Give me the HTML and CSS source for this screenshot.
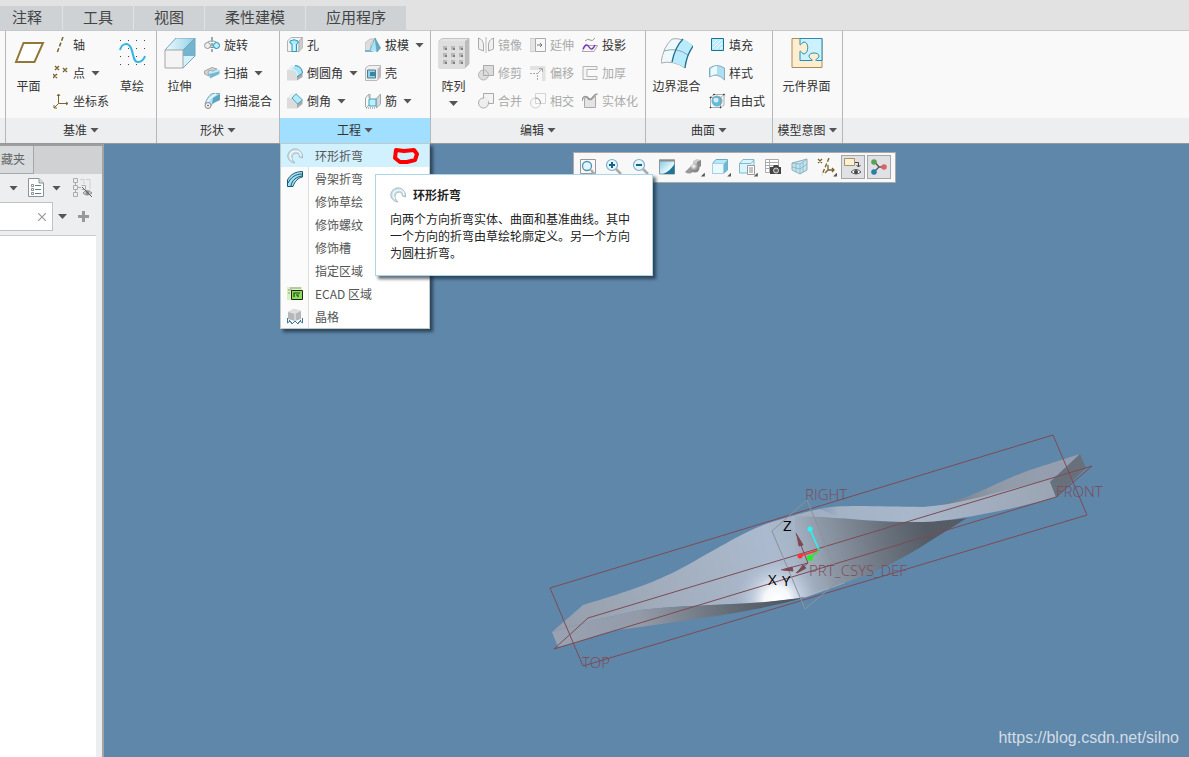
FILE: index.html
```html
<!DOCTYPE html>
<html lang="zh-CN">
<head>
<meta charset="utf-8">
<title>零件建模</title>
<link rel="stylesheet" href="styles.css">
</head>
<body>
<nav class="tabs">
  <button class="tab tab-first">注释</button>
  <button class="tab">工具</button>
  <button class="tab">视图</button>
  <button class="tab">柔性建模</button>
  <button class="tab">应用程序</button>
</nav>

<header class="ribbon">
  <div class="group stub"><div class="tools"></div><div class="foot"></div></div>

  <section class="group datum">
    <div class="tools">
      <button class="big"><svg viewBox="0 0 32 32"><path d="M10.500 5H30L21.500 24H3Z" fill="#fff" stroke="#93773a" stroke-width="2"/></svg>平面</button>
      <div class="stack">
        <button class="cmd"><svg viewBox="0 0 16 16"><path d="M10 0L4 16" stroke="#7b632c" stroke-width="1.500" stroke-dasharray="4 2"/></svg>轴</button>
        <button class="cmd"><svg viewBox="0 0 16 16"><path d="M2 1l4 4M6 1l-4 4M10 3l4 4M14 3l-4 4M0 9l4 4M4 9l-4 4" stroke="#7b632c" stroke-width="1.400"/></svg>点<i class="caret"></i></button>
        <button class="cmd"><svg viewBox="0 0 16 16"><path d="M5.500 1V10.500H15M5.500 10.500L1 15M4 3l1.500-2L7 3M13 9l2 1.500L13 12M1 12v3h3" fill="none" stroke="#7b632c"/></svg>坐标系</button>
      </div>
      <button class="big"><svg viewBox="0 0 32 32"><path d="M4 2.500H30M4 10.500H30M4 18.500H30M4 26.500H30" stroke="#444" stroke-dasharray="1 7"/><path d="M4 12C6 5 12 4 15 10C18 17 17 24 22 24C26 24 28 21 29 18" fill="none" stroke="#31b4e3" stroke-width="2"/></svg>草绘</button>
    </div>
    <button class="foot">基准<i class="caret"></i></button>
  </section>

  <section class="group shape">
    <div class="tools">
      <button class="big"><svg viewBox="0 0 32 32"><defs><linearGradient id="top" x2="1"><stop offset="0" stop-color="#effbff"/><stop offset="1" stop-color="#93cfe6"/></linearGradient></defs><path d="M1 12L12 0H31L19 12Z" fill="url(#top)"/><path d="M19 12L31 0V18H19Z" fill="#74b4d0"/><path d="M19 30L31 18H19Z" fill="#d5f2fc"/><path d="M1 12H19V30H1Z" fill="#f4f4f4" stroke="#a5a5a5"/><path d="M1 12L12 0H31V18L19 30M19 12L31 0" fill="none" stroke="#71a9c0"/></svg>拉伸</button>
      <div class="stack">
        <button class="cmd"><svg viewBox="0 0 16 16"><path d="M3.500 5Q8 2 12.500 5M3.500 11Q8 9 12.500 11" fill="none" stroke="#78aebd"/><circle cx="3.500" cy="8.500" r="3" fill="#eee" stroke="#999"/><circle cx="12.500" cy="8.500" r="3" fill="#bff0ff" stroke="#168ab5"/><path d="M8 0V16" stroke="#555" stroke-dasharray="3 1 1 1"/></svg>旋转</button>
        <button class="cmd"><svg viewBox="0 0 16 16"><path d="M5 8L11 6.500 15.500 5V9L6 13.500Z" fill="#74b8d3"/><path d="M5 8L11 6.500 15.500 5" stroke="#c4eaf7" stroke-width="2" fill="none"/><path d="M.5 6L8 2.500 13 4 9 6 5 5.500 4 8 5 9V11L.5 9Z" fill="#cfd3d5" stroke="#8e9a9f" stroke-width=".8"/></svg>扫描<i class="caret"></i></button>
        <button class="cmd"><svg viewBox="0 0 16 16"><path d="M1 11C3 5 6 1 9 .5H15.500V7C10 8 8 11 6 14Z" fill="#b2e2f2" stroke="#6f9aa9" stroke-width=".8"/><path d="M9 5L15.500 1V7L8 11Z" fill="#5aa5c3"/><path d="M3 10C5 6 8 3 12 1" fill="none" stroke="#e9faff" stroke-width="1.500"/><circle cx="4" cy="12.500" r="3" fill="#f0f0f0" stroke="#888"/><circle cx="4" cy="12.500" r=".8" fill="#555"/></svg>扫描混合</button>
      </div>
    </div>
    <button class="foot">形状<i class="caret"></i></button>
  </section>

  <section class="group engineering">
    <div class="tools">
      <div class="stack">
        <button class="cmd"><svg viewBox="0 0 16 16"><path d="M.5 4L4 .5H15.500L12 4V14.500H.5Z" fill="#f3f3f3" stroke="#b3b3b3"/><path d="M12 4V14.500L15.500 11V.5Z" fill="#ccc" stroke="#aaa" stroke-width=".6"/><path d="M3 4Q7 1.500 11 4V6L9.500 7V14.500H5V7L3 6Z" fill="#a8eaff" stroke="#2b9abb"/><path d="M7 7V14" stroke="#fff"/></svg>孔</button>
        <button class="cmd"><svg viewBox="0 0 16 16"><path d="M0 5L4 .5H8L4 5Z" fill="#eee"/><path d="M0 5H4Q10 6 10 12V15.500H0Z" fill="#dcdcdc"/><path d="M10 12l5.500-4v4L10 15.500z" fill="#aaa"/><path d="M4 5L8 .5Q15 1 15.500 8L10 12Q10 6 4 5Z" fill="#a7e3fa"/><path d="M8 .5Q15 1 15.500 8L10 12" fill="none" stroke="#338bab"/><path d="M5 4Q10 5 11 10" stroke="#e6f9ff" fill="none"/></svg>倒圆角<i class="caret"></i></button>
        <button class="cmd"><svg viewBox="0 0 16 16"><path d="M0 5L4 .5H9L5 5Z" fill="#eee"/><path d="M0 5H5L10 11V15.500H0Z" fill="#dcdcdc"/><path d="M10 11l5.500-4v4L10 15.500z" fill="#aaa"/><path d="M5 5L9 .8L15.500 7L10.500 11Z" fill="#b2ecfb" stroke="#338bab" stroke-width=".8"/></svg>倒角<i class="caret"></i></button>
      </div>
      <div class="stack">
        <button class="cmd"><svg viewBox="0 0 16 16"><path d="M0 6L5 2H10L6 6V14H0Z" fill="#dedede" stroke="#b0b0b0" stroke-width=".7"/><path d="M0 13H5L9 15H0Z" fill="#76b6ce"/><path d="M5 13L10 1 12 15Z" fill="#ade4f5"/><path d="M10 1L15.500 11L12 15Z" fill="#62a8c3"/><path d="M5 13L10 1L15.500 11L12 15L10 1" fill="none" stroke="#5c9db5" stroke-width=".7"/></svg>拔模<i class="caret"></i></button>
        <button class="cmd"><svg viewBox="0 0 16 16"><path d="M.5 3L4 .5H15.500V12L12 15.500H.5Z" fill="#f0f0f0" stroke="#aaa" stroke-width=".8"/><path d="M12.500 4l3-3v11l-3 3z" fill="#bbb"/><path d="M2.500 5H10.500V13H2.500Z" fill="#94d3e8" stroke="#507d8d"/><path d="M5 7H10V11H5Z" fill="#3985a5"/></svg>壳</button>
        <button class="cmd"><svg viewBox="0 0 16 16"><path d="M.5 5L4 1V5M.5 5V14M5 1V11L1 15" fill="none" stroke="#9aa8ad"/><path d="M4 6H11.500L15.500 1V10L11 13H4Z" fill="#9bd3e6"/><path d="M4 6H11V13H4Z" fill="#b8f2ff" stroke="#4c9db7"/><path d="M11 6L15.500 1V11L11.500 15V6" fill="#d2d8da" stroke="#899da5" stroke-width=".8"/><path d="M1 15H11" stroke="#777" stroke-dasharray="1 1"/></svg>筋<i class="caret"></i></button>
      </div>
    </div>
    <button class="foot active" aria-expanded="true">工程<i class="caret"></i></button>
    <div class="menu" role="menu">
      <button class="item hover" role="menuitem"><svg viewBox="0 0 16 16"><path d="M6 14.500C2 13 0 10 1 6C3 1 9-1 13 3C15 5 16 7 15.500 10L12.500 9C12 6 10 4.500 8 5.500C4 7 4 11 8 15Z" fill="#c9dfe7" stroke="#9fb0b6" stroke-width=".8"/><path d="M5 12C1 8 4 3 9 3C12 3 14 5 14 8" fill="none" stroke="#f5fcff" stroke-width="1.200"/></svg>环形折弯
        <svg class="mark" viewBox="0 0 28 20"><path d="M4 4L12 5L22 4L25 8L23 14L15 16H8L3 12Z" fill="none" stroke="red" stroke-width="4" stroke-linejoin="round"/></svg></button>
      <button class="item" role="menuitem"><svg viewBox="0 0 16 16"><path d="M.5 9C3 4 8 .5 15.500 .5V6C11 7 8 10 6 15.500H.5Z" fill="#a6def0" stroke="#155a74"/><path d="M1 12C4 6 9 3 15 3M4 15C5 9 9 6 15 5" fill="none" stroke="#155a74"/></svg>骨架折弯</button>
      <button class="item" role="menuitem"><svg viewBox="0 0 16 16"></svg>修饰草绘</button>
      <button class="item" role="menuitem"><svg viewBox="0 0 16 16"></svg>修饰螺纹</button>
      <button class="item" role="menuitem"><svg viewBox="0 0 16 16"></svg>修饰槽</button>
      <button class="item" role="menuitem"><svg viewBox="0 0 16 16"></svg>指定区域</button>
      <button class="item" role="menuitem"><svg viewBox="0 0 16 16"><path d="M0 1H15V14H0Z" fill="#d9f3bb"/><path d="M1 7H3M1 4H5V9M3 2H14" stroke="#999" fill="none"/><path d="M4.500 4.500H15.500V13.500H4.500Z" fill="#8bdc55" stroke="#222"/><path d="M7 11V7H13M9 9H11V11M13 8" fill="none" stroke="#194818" stroke-width="1.200"/></svg>ECAD 区域</button>
      <button class="item" role="menuitem"><svg viewBox="0 0 16 16"><path d="M1 3L7 0L14 2V10L8 12L1 10Z" fill="#b5b8ba"/><path d="M1 3L7 0L14 2L8 5Z" fill="#dedede"/><path d="M8 5v7" stroke="#eee"/><path d="M.5 9V14L3 12 5 15 8 12 11 15 13 12 15.500 14V9M2 11L5 14M14 11L11 14" fill="none" stroke="#397c9b"/></svg>晶格</button>
    </div>
    <aside class="tip" role="tooltip">
      <h2><svg viewBox="0 0 16 16"><path d="M6 14.500C2 13 0 10 1 6C3 1 9-1 13 3C15 5 16 7 15.500 10L12.500 9C12 6 10 4.500 8 5.500C4 7 4 11 8 15Z" fill="#c9dfe7" stroke="#9fb0b6" stroke-width=".8"/><path d="M5 12C1 8 4 3 9 3C12 3 14 5 14 8" fill="none" stroke="#f5fcff" stroke-width="1.200"/></svg>环形折弯</h2>
      <p>向两个方向折弯实体、曲面和基准曲线。其中一个方向的折弯由草绘轮廓定义。另一个方向为圆柱折弯。</p>
    </aside>
  </section>

  <section class="group edit">
    <div class="tools">
      <button class="big"><svg viewBox="0 0 32 32"><path d="M1 3L4 .5H31V26L27 30H1Z" fill="#e4e4e4" stroke="#c4c4c4"/><path d="M27 3L31 .5V26L27 30Z" fill="#bcbcbc"/><path d="M1 3H27V30H1Z" fill="#dedede"/><path d="M5 10H25M5 17H25M5 24H25" stroke="#b9b9b9" stroke-width="4" stroke-dasharray="4 4"/><path d="M7 11H25M7 18H25M7 25H25" stroke="#808080" stroke-width="2" stroke-dasharray="2 6"/></svg>阵列<i class="caret"></i></button>
      <div class="stack">
        <button class="cmd" disabled><svg viewBox="0 0 16 16"><path d="M.5 1Q5.500 3 5.500 8V14L.5 12ZM15.500 1Q10.500 3 10.500 8V14L15.500 12Z" fill="#f1f1f1" stroke="#aaa"/><path d="M8 0V16" stroke="#bbb"/></svg>镜像</button>
        <button class="cmd" disabled><svg viewBox="0 0 16 16"><path d="M5.500 .5H15.500V10.500H5.500Z" fill="#ddd" stroke="#aaa"/><circle cx="5.500" cy="10" r="5" fill="#ddd" stroke="#b5b5b5"/><path d="M5.500 5V10.500H10" fill="none" stroke="#aaa"/></svg>修剪</button>
        <button class="cmd" disabled><svg viewBox="0 0 16 16"><path d="M5.500 .5H15.500V10.500H5.500Z" fill="#f3f3f3" stroke="#aaa"/><circle cx="5.500" cy="10" r="5" fill="#eee" stroke="#aaa"/><path d="M6 5h4v5H6z" fill="#eee"/></svg>合并</button>
      </div>
      <div class="stack">
        <button class="cmd" disabled><svg viewBox="0 0 16 16"><path d="M0 1.500H5.500V14.500H0Z" fill="#e5e5e5" stroke="#ccc"/><path d="M5.500 1.500H15.500V14.500H5.500Z" fill="#f8f8f8" stroke="#aaa"/><path d="M7 8H12M10 6L12 8L10 10" fill="none" stroke="#777"/></svg>延伸</button>
        <button class="cmd" disabled><svg viewBox="0 0 16 16"><path d="M0 1H15.500V16H12V5H0Z" fill="#e2e2e2"/><path d="M0 8.500H7.500V16" fill="none" stroke="#aaa" stroke-dasharray="2 1"/><path d="M7 9L12 4M9 3.500H12.500V7" fill="none" stroke="#aaa"/></svg>偏移</button>
        <button class="cmd" disabled><svg viewBox="0 0 16 16"><path d="M5.500 .5H15.500V10.500H5.500Z" fill="none" stroke="#d4d4d4"/><circle cx="5.500" cy="10" r="5" fill="none" stroke="#ccc"/><path d="M5.500 5A5 5 0 0 1 10.500 10.500" fill="none" stroke="#999"/></svg>相交</button>
      </div>
      <div class="stack">
        <button class="cmd"><svg viewBox="0 0 16 16"><path d="M3 4Q6 1 8 3T13 1" fill="none" stroke="#999"/><path d="M0 14.500L4 8.500H15.500L12 14.500Z" fill="#f4f4f4" stroke="#aaa"/><path d="M1 12Q4 5 7 10T13 8" fill="none" stroke="#7c2abd" stroke-width="1.400"/></svg>投影</button>
        <button class="cmd" disabled><svg viewBox="0 0 16 16"><path d="M1 1.500H15V4.500H5V11.500H15V14.500H1Z" fill="#f4f4f4" stroke="#b5b5b5"/></svg>加厚</button>
        <button class="cmd" disabled><svg viewBox="0 0 16 16"><path d="M2.500 5V14.500H13.500V3L9 7 6 4Z" fill="#e4e4e4" stroke="#aaa"/><path d="M0 8Q1 2 5 4Q8 9 11 4Q13 1 15.500 1" fill="none" stroke="#999" stroke-width="1.500"/></svg>实体化</button>
      </div>
    </div>
    <button class="foot">编辑<i class="caret"></i></button>
  </section>

  <section class="group surface">
    <div class="tools">
      <button class="big"><svg viewBox="0 0 32 32"><path d="M0 25Q2 9 11 1Q21-1 32 8Q25 18 24 30Q13 22 0 25Z" fill="#eef9fd" stroke="#aaa"/><path d="M22 1Q27 3 32 8Q25 18 24 30Q18 26 11 24Q14 9 22 1Z" fill="#b8ebfb"/><path d="M3 13Q16 9 27 17" fill="none" stroke="#8aa6b1"/><path d="M22 1Q14 9 11 24M32 8Q25 18 24 30" fill="none" stroke="#27718e" stroke-width="1.300"/></svg>边界混合</button>
      <div class="stack">
        <button class="cmd"><svg viewBox="0 0 16 16"><path d="M2.500 1.500H14.500V13.500H2.500Z" fill="#b7eafb" stroke="#137391"/><path d="M4 7L8 3M4 11L12 3M7 12L13 6M11 12L13 10" stroke="#fff"/></svg>填充</button>
        <button class="cmd"><svg viewBox="0 0 16 16"><path d="M.5 3Q8-2 15.500 3V15Q8 7 .5 12Z" fill="#acdff1" stroke="#7b9ba7" stroke-width=".8"/><path d="M2 4Q5 1 8 1V9Q5 9 2 11Z" fill="#eafaff"/></svg>样式</button>
        <button class="cmd"><svg viewBox="0 0 16 16"><circle cx="8" cy="8" r="5.500" fill="#64b9d9"/><circle cx="7" cy="7" r="2.500" fill="#cef3ff"/><path d="M1.500 4.500H11.500V14.500H1.500ZM5 1.500H15V12M1.500 4.500L5 1.500M11.500 4.500L15 1.500M11.500 14.500L15 12" fill="none" stroke="#999" stroke-width=".8"/><path d="M1 4h1v1H1zM4.500 1h1v1h-1zM14.500 1h1v1h-1zM11 14h1v1h-1zM1 14h1v1H1z" fill="#333" stroke="#333" stroke-width=".5"/></svg>自由式</button>
      </div>
    </div>
    <button class="foot">曲面<i class="caret"></i></button>
  </section>

  <section class="group intent">
    <div class="tools">
      <button class="big"><svg viewBox="0 0 32 32"><path d="M1 .5H31V29.500H1Z" fill="#ffedcf" stroke="#ab8c54"/><path d="M9 .5H31V22.500H26C22 22 28 21 28 18C28 14 18 14 18 18C18 21 24 22.500 20 22.500H9V14C9 11 11 16 13 16C18 15 18 4 13 4C11 4 9 9 9 6Z" fill="#cdf1ff" stroke="#278eb1"/></svg>元件界面</button>
    </div>
    <button class="foot">模型意图<i class="caret"></i></button>
  </section>

  <div class="group rest"><div class="tools"></div><div class="blank"></div></div>
</header>

<div class="work">
  <aside class="side">
    <div class="side-tabs"><button class="side-tab">藏夹</button></div>
    <div class="side-bar">
      <button class="tool" aria-label="显示"><i class="caret"></i></button>
      <button class="tool" aria-label="设置"><svg viewBox="0 0 18 20"><path d="M1.500 .5H12L16.500 5V18.500H1.500Z" fill="#fcfeff" stroke="#8a9498"/><path d="M12 .5V5H16.500" fill="#ddd" stroke="#8a9498"/><path d="M8 7.500H14M8 11.500H14M8 15.500H14" stroke="#5d808b"/><path d="M4.500 6.500h2v2h-2zM4.500 10.500h2v2h-2zM4.500 14.500h2v2h-2z" fill="none" stroke="#666" stroke-width=".7"/></svg><i class="caret"></i></button>
      <button class="tool" aria-label="隐藏树"><svg viewBox="0 0 22 20"><path d="M1.500 .5H5.500V4.500H1.500ZM1.500 7.500H5.500V11.500H1.500ZM1.500 14.500H5.500V18.500H1.500ZM3.500 5V7M3.500 12V14M6 9.500H9M9.500 7.500H13.500V11.500H9.500" fill="none" stroke="#aaadae"/><path d="M8 1.500H12V6M14 1.500H18V11" fill="none" stroke="#cfd1d3"/><path d="M11 15Q15 10 20 15Q15 19 11 15Z" fill="#ddd" stroke="#888"/><circle cx="15.500" cy="15" r="2" fill="#888"/><path d="M10 9L20 19" stroke="#666"/></svg></button>
    </div>
    <div class="side-find">
      <label class="find"><input type="text" aria-label="筛选"><button class="clear" aria-label="清除"><svg viewBox="0 0 8 8"><path d="M0 0L8 8M8 0L0 8" stroke="#999" stroke-width="1.200"/></svg></button></label>
      <button class="tool" aria-label="选项"><i class="caret"></i></button>
      <button class="tool" aria-label="添加"><svg class="plus" viewBox="0 0 11 11"><path d="M5.500 0V11M0 5.500H11" stroke="#999" stroke-width="3"/></svg></button>
    </div>
    <div class="tree"></div>
  </aside>

  <main class="view">
    <svg class="scene" viewBox="104 144 1085 613" preserveAspectRatio="xMidYMid meet" role="img" aria-label="扭曲实体模型">
      <defs>
        <linearGradient id="face" gradientUnits="userSpaceOnUse" x1="560" y1="640" x2="800" y2="550"><stop offset="0" stop-color="#949dab"/><stop offset=".5" stop-color="#a3afbf"/><stop offset=".9" stop-color="#abbace"/><stop offset="1" stop-color="#a5b3c5"/></linearGradient>
        <linearGradient id="dark" gradientUnits="userSpaceOnUse" x1="795" y1="560" x2="925" y2="527"><stop offset="0" stop-color="#97a3b2" stop-opacity="0"/><stop offset=".25" stop-color="#8d98a6"/><stop offset=".65" stop-color="#6c7580"/><stop offset="1" stop-color="#555c66"/></linearGradient>
        <linearGradient id="under" gradientUnits="userSpaceOnUse" x1="555" y1="640" x2="800" y2="600"><stop offset="0" stop-color="#99a2b2"/><stop offset=".35" stop-color="#939ba9"/><stop offset=".75" stop-color="#606871"/><stop offset="1" stop-color="#4c535b"/></linearGradient>
        <linearGradient id="band" gradientUnits="userSpaceOnUse" x1="790" y1="515" x2="1060" y2="490"><stop offset="0" stop-color="#98a5b6" stop-opacity="0"/><stop offset=".18" stop-color="#a4b2c6"/><stop offset=".45" stop-color="#a9b7cb"/><stop offset="1" stop-color="#9aa4b2"/></linearGradient>
        <linearGradient id="back" gradientUnits="userSpaceOnUse" x1="942" y1="504" x2="1040" y2="470"><stop offset="0" stop-color="#737c87"/><stop offset=".5" stop-color="#8f99a6"/><stop offset="1" stop-color="#959eae"/></linearGradient>
        <radialGradient id="shine" gradientUnits="userSpaceOnUse" cx="777" cy="600" r="42"><stop offset="0" stop-color="#fff"/><stop offset=".3" stop-color="#fff" stop-opacity=".9"/><stop offset=".6" stop-color="#dfe8f5" stop-opacity=".4"/><stop offset="1" stop-color="#b4c3d6" stop-opacity="0"/></radialGradient>
      </defs>
      <path d="M552 632L583 605C633 590 655 582 680 569S745 530 772 522S805 512 820 509L845 520V583L804 598C740 606 690 604 640 610L600 619Z" fill="url(#face)"/>
      <path d="M795 516C820 516 845 519 873 521S940 522 967 518L927 543C890 567 857 581 795 598Z" fill="url(#dark)"/>
      <path d="M720 558H822V592L800 598 753 604H720Z" fill="url(#shine)"/>
      <path d="M552 632L600 619 640 610C690 604 740 607 806 597C760 611 700 618 640 627L617 630C600 634 590 638 573 643L558 647Z" fill="url(#under)"/>
      <path d="M938 505C970 500 1000 480 1033 469L1080 454 1050 482 975 502Z" fill="url(#back)"/>
      <path d="M790 516L820 509C840 504 880 507 923 507C965 504 1000 490 1050 480L1056 497C1010 510 950 522 920 522S860 520 840 518S810 517 790 516Z" fill="url(#band)"/>
      <path d="M1080 454L1086 468 1056 497 1050 482Z" fill="#68717b"/>
      <g class="plane">
        <path d="M550 588L1053 435 1087 515 583 666Z"/>
        <path d="M554 649L588 618 1092 466 1056 497Z"/>
      </g>
      <path class="plane-gray" d="M807 500L772 531 805 609 840 580Z"/>
      <g class="axes"><path d="M808 563L796 533M808 563L781 570M808 563L796 573"/><path class="head" d="M797 535L803 545 799 546ZM783 570L792 567 793 571ZM797 573L803 565 806 568Z"/></g>
      <path d="M810 529L819 550" stroke="#28f5f5" stroke-width="1.500"/><path d="M800 556L819 550" stroke="#f33" stroke-width="1.500"/><path d="M810 558L819 550" stroke="#2be52b" stroke-width="1.500"/>
      <circle cx="810" cy="529" r="2.500" fill="#28f5f5"/><circle cx="800" cy="556" r="2.500" fill="#f33"/><circle cx="810" cy="558" r="3" fill="#22f022"/>
      <g class="labels"><text x="805" y="500">RIGHT</text><text x="1056" y="497">FRONT</text><text x="582" y="668">TOP</text><text x="809" y="576">PRT_CSYS_DEF</text></g>
      <g class="letters"><text x="783" y="531">Z</text><text x="768" y="585">X</text><text x="782" y="586">Y</text></g>
    </svg>
    <div class="viewbar" role="toolbar">
      <button class="vb" aria-label="重新调整"><svg viewBox="0 0 18 18"><path d="M1.500 1.500H16.500V15.500H1.500Z" fill="#f8f8f8" stroke="#999"/><circle cx="8" cy="8" r="4.500" fill="#e4f6fc" stroke="#4a95b4" stroke-width="1.300"/><path d="M12 12L16 17" stroke="#aaa" stroke-width="2.500"/></svg></button>
      <button class="vb" aria-label="放大"><svg viewBox="0 0 18 18"><circle cx="7" cy="7" r="5.500" fill="#e4f6fc" stroke="#7fafc6" stroke-width="1.200"/><path d="M4 7H10M7 4V10" stroke="#14638a" stroke-width="2"/><path d="M11 11L16 16" stroke="#aaa" stroke-width="2.500"/></svg></button>
      <button class="vb" aria-label="缩小"><svg viewBox="0 0 18 18"><circle cx="7" cy="7" r="5.500" fill="#e4f6fc" stroke="#7fafc6" stroke-width="1.200"/><path d="M4 7H10" stroke="#14638a" stroke-width="2"/><path d="M11 11L16 16" stroke="#aaa" stroke-width="2.500"/></svg></button>
      <button class="vb" aria-label="重画"><svg viewBox="0 0 18 18"><defs><linearGradient id="pane" x2="1" y2="1"><stop offset="0" stop-color="#7cc8e2"/><stop offset=".7" stop-color="#eefbff"/></linearGradient></defs><path d="M1.500 2H16.500V16H1.500Z" fill="url(#pane)" stroke="#8b9aa1"/><path d="M1 1.500H17V3.500H1Z" fill="#8b8b8b"/><path d="M16.500 6V16H5C10 14 13 11 16.500 6Z" fill="#1f7598"/></svg></button>
      <button class="vb more" aria-label="渲染"><svg viewBox="0 0 18 18"><defs><radialGradient id="ball" cx=".35" cy=".3"><stop offset="0" stop-color="#fff"/><stop offset="1" stop-color="#888"/></radialGradient></defs><path d="M8 3L12 1 16 2V8L12 11 8 8Z" fill="#ccc"/><path d="M12 4L16 2V8L12 11Z" fill="#888"/><path d="M0 14L6 8 8 14Q4 17 0 14Z" fill="#999"/><circle cx="10" cy="10" r="4.500" fill="url(#ball)"/></svg></button>
      <button class="vb more" aria-label="显示样式"><svg viewBox="0 0 18 18"><path d="M1.500 5.500L5 1.500H16.500V12L12.500 15.500H1.500Z" fill="#b5e8f8" stroke="#6daac2"/><path d="M1.500 5.500H12.500V15.500H1.500Z" fill="#eaf9ff" stroke="#a2d3e4"/><path d="M13 5.500L16.500 2V12L13 15Z" fill="#70b8d2"/></svg></button>
      <button class="vb more" aria-label="已保存方向"><svg viewBox="0 0 18 18"><path d="M1.500 5.500L5 1.500H16V9L13 15H1.500Z" fill="#d9f5fd" stroke="#82b9cc"/><path d="M1.500 5.500H13L16 2" fill="none" stroke="#82b9cc"/><path d="M9.500 7.500H16.500V16.500H9.500Z" fill="#fff" stroke="#999"/><path d="M11 10H15M11 12H15M11 14H15" stroke="#888"/></svg></button>
      <button class="vb" aria-label="视图管理器"><svg viewBox="0 0 18 18"><path d="M1.500 1.500H14.500V14.500H1.500ZM1 4.500H15M1 7.500H15M1 10.500H15M5.500 1V15" fill="#fff" stroke="#aaa"/><path d="M6 9H9L10 7H14L15 9H17V16H6Z" fill="#444"/><circle cx="12" cy="12.500" r="2.500" fill="#666" stroke="#ddd"/></svg></button>
      <button class="vb" aria-label="透视图"><svg viewBox="0 0 18 18"><path d="M1 5L16 1V12L9 16L1 12Z" fill="#c4e4ef" stroke="#8fb0bb"/><path d="M1 5L9 6L16 1M9 6V16M5 5V14M12 4V14M1 9L9 11L16 6" fill="none" stroke="#84b2c2" stroke-width=".8"/></svg></button>
      <button class="vb more" aria-label="基准显示"><svg viewBox="0 0 18 18"><path d="M1 1l4 4M5 1L1 5M11 7V12H17M11 12L8 15M15 10l2 2-2 2" fill="none" stroke="#7b632c" stroke-width="1.300"/><path d="M12 0L5 17" stroke="#7b632c" stroke-width="1.400" stroke-dasharray="4 2"/></svg></button>
      <button class="vb on" aria-label="注释显示"><svg viewBox="0 0 18 18"><path d="M.5 .5H10.500V7.500H.5Z" fill="#fff1d2" stroke="#a89468"/><path d="M11 4.500H14.500V9M12.500 7l2 2 2-2" fill="none" stroke="#444"/><path d="M7 14Q12 9 17 14Q12 18 7 14Z" fill="#fff" stroke="#555"/><circle cx="12" cy="14" r="2" fill="#444"/></svg></button>
      <button class="vb on" aria-label="旋转中心"><svg viewBox="0 0 18 18"><path d="M4 3L9 9L15 9M9 9L4 14" fill="none" stroke="#555" stroke-width="1.300"/><circle cx="4" cy="4" r="2.800" fill="#56a355"/><circle cx="14" cy="9" r="2.800" fill="#d96461"/><circle cx="4" cy="14" r="2.800" fill="#267fa6"/></svg></button>
    </div>
    <a class="mark-url" href="https://blog.csdn.net/silno">https://blog.csdn.net/silno</a>
  </main>
</div>
</body>
</html>
```
FILE: styles.css
```css
* { box-sizing: border-box; }

body {
  margin: 0;
  height: 100vh;
  display: flex;
  flex-direction: column;
  overflow: hidden;
  background: #e2e2e2;
  color: #333;
  font: 12px/18px "Noto Sans CJK SC", sans-serif;
}

button {
  margin: 0;
  padding: 0;
  border: 0;
  background: none;
  color: inherit;
  font: inherit;
  white-space: nowrap;
}

svg { display: block; flex: none; }

.caret {
  flex: none;
  width: 9px;
  height: 5px;
  background: #555;
  clip-path: polygon(0 0, 100% 0, 50% 100%);
}

/* Tab strip */
.tabs {
  display: flex;
  gap: 1px;
  padding-top: 6px;
  border-bottom: 1px solid #c6c8ca;
}

.tab {
  height: 24px;
  padding: 0 20px 2px;
  background: #ced2d5;
  color: #444;
  font-size: 15px;
  line-height: 22px;
}

.tab-first { padding-left: 12px; }

/* Ribbon */
.ribbon {
  display: flex;
  border-bottom: 1px solid #999;
  background: #f9f9f9;
}

.group {
  position: relative;
  display: flex;
  flex-direction: column;
  border-left: 1px solid #b5b7ba;
}

.stub { width: 5px; border-left: 0; }
.datum { width: 151px; }
.shape { width: 123px; }
.engineering { width: 151px; }
.edit { width: 215px; }
.surface { width: 127px; }
.intent { width: 70px; }
.rest { flex: 1; }

.tools { display: grid; height: 87px; }
.datum .tools { grid-template-columns: 47px 66px 28px; }
.shape .tools { grid-template-columns: 47px auto; }
.engineering .tools { grid-template-columns: 78px auto; padding-left: 7px; }
.edit .tools { grid-template-columns: 47px 52px 52px auto; }
.surface .tools { grid-template-columns: 63px auto; }

.foot,
.blank {
  display: flex;
  align-items: center;
  justify-content: center;
  gap: 3px;
  height: 25px;
  padding-bottom: 1px;
  background: #edeef0;
}

.foot.active { background: #a0dfff; }

.big {
  display: flex;
  flex-direction: column;
  align-items: center;
  padding: 7px 2px 0 0;
}

.big svg { width: 32px; height: 32px; margin-bottom: 7px; }
.big .caret { margin-top: 6px; }

.cmd {
  display: flex;
  align-items: center;
  gap: 4px;
  height: 28px;
}

.cmd svg { width: 16px; height: 16px; }
.cmd .caret { margin-left: 2px; }
.cmd:disabled { color: #aaa; }

/* Drop-down menu */
.menu {
  position: absolute;
  z-index: 3;
  top: 112px;
  left: 0;
  width: 150px;
  border: 1px solid #c3c8cb;
  background: linear-gradient(90deg, #fbfbfb 27px, #ddd 27px, #ddd 28px, #fff 28px);
  box-shadow: 3px 3px 3px rgba(20, 35, 50, .65);
}

.item {
  display: flex;
  align-items: center;
  gap: 12px;
  width: 100%;
  height: 23px;
  padding-left: 6px;
  color: #555;
}

.item svg { width: 16px; height: 16px; }
.item.hover { background: #d2f1ff; }
.item .mark { width: 28px; height: 20px; margin-left: 17px; }

.tip {
  position: absolute;
  z-index: 4;
  top: 143px;
  left: 95px;
  width: 278px;
  padding: 10px 14px 14px;
  border: 1px solid #acd5e8;
  background: #fff;
  box-shadow: 3px 3px 3px rgba(20, 35, 50, .65);
  color: #222;
}

.tip h2 {
  display: flex;
  align-items: center;
  gap: 7px;
  margin: 0 0 5px;
  font-size: 12px;
  line-height: 20px;
}

.tip h2 svg { width: 16px; height: 16px; }
.tip p { width: 241px; margin: 0; line-height: 17px; }

/* Side panel */
.work { display: flex; flex: 1; min-height: 0; }

.side {
  display: flex;
  flex-direction: column;
  width: 104px;
  border-top: 2px solid #9d9d9d;
  border-right: 2px solid #a4a4a4;
  background: #edeef0;
}

.side-tabs { height: 28px; background: #d0d1d3; }

.side-tab {
  display: flex;
  align-items: center;
  justify-content: flex-end;
  width: 34px;
  height: 28px;
  padding: 0 8px 2px 0;
  border-right: 1px solid #a5a7a9;
  border-bottom: 1px solid #a5a7a9;
  background: #d8dbdd;
  color: #666;
}

.side-bar {
  display: flex;
  align-items: center;
  gap: 9px;
  height: 28px;
  padding-left: 9px;
}

.tool { display: flex; align-items: center; gap: 7px; }
.side-bar svg { width: 18px; height: 20px; }
.side-bar .tool:last-child { margin-left: 2px; }
.side-bar .tool:last-child svg { width: 22px; }

.side-find {
  display: flex;
  align-items: center;
  gap: 5px;
  padding-bottom: 4px;
}

.find {
  display: flex;
  align-items: center;
  width: 53px;
  height: 29px;
  border: 1px solid #bfc1c3;
  border-left: 0;
  background: #fff;
}

.find input { width: 38px; border: 0; outline: 0; background: none; }
.clear svg { width: 8px; height: 8px; }
.side-find .tool:last-child { margin-left: 6px; }
.plus { width: 11px; height: 11px; }

.tree {
  flex: 1;
  width: 96px;
  border-top: 1px solid #ccc;
  background: #fff;
}

/* Graphics area */
.view {
  position: relative;
  flex: 1;
  min-width: 0;
  overflow: hidden;
  background: #5f87aa;
}

.scene { width: 100%; height: 100%; }
.plane { fill: none; stroke: #7d4a54; }
.plane-gray { fill: none; stroke: #8b929c; }
.axes { fill: none; stroke: #7d4a54; }
.axes .head { fill: #7d4a54; }
.labels { fill: #7d4a54; font: 300 15px "Open Sans", sans-serif; }
.letters { fill: #000; font: 15px "Open Sans", sans-serif; }

.viewbar {
  position: absolute;
  top: 8px;
  left: 469px;
  display: flex;
  align-items: center;
  justify-content: space-between;
  width: 323px;
  height: 31px;
  padding: 0 4px 2px 2px;
  border: 1px solid #aaa;
  background: #f8f8f8;
}

.vb {
  position: relative;
  display: flex;
  align-items: center;
  justify-content: center;
  width: 24px;
  height: 24px;
}

.vb svg { width: 18px; height: 18px; }
.vb.on { border: 1px solid #a3a7aa; background: #dfe1e4; }

.vb.more::after {
  content: "";
  position: absolute;
  right: 1px;
  bottom: 2px;
  width: 4px;
  height: 4px;
  background: #555;
  clip-path: polygon(100% 0, 100% 100%, 0 100%);
}

.mark-url {
  position: absolute;
  right: 10px;
  bottom: 9px;
  color: rgba(255, 255, 255, .72);
  font: 16px/20px "Liberation Sans", Arial, sans-serif;
  text-decoration: none;
}
```
